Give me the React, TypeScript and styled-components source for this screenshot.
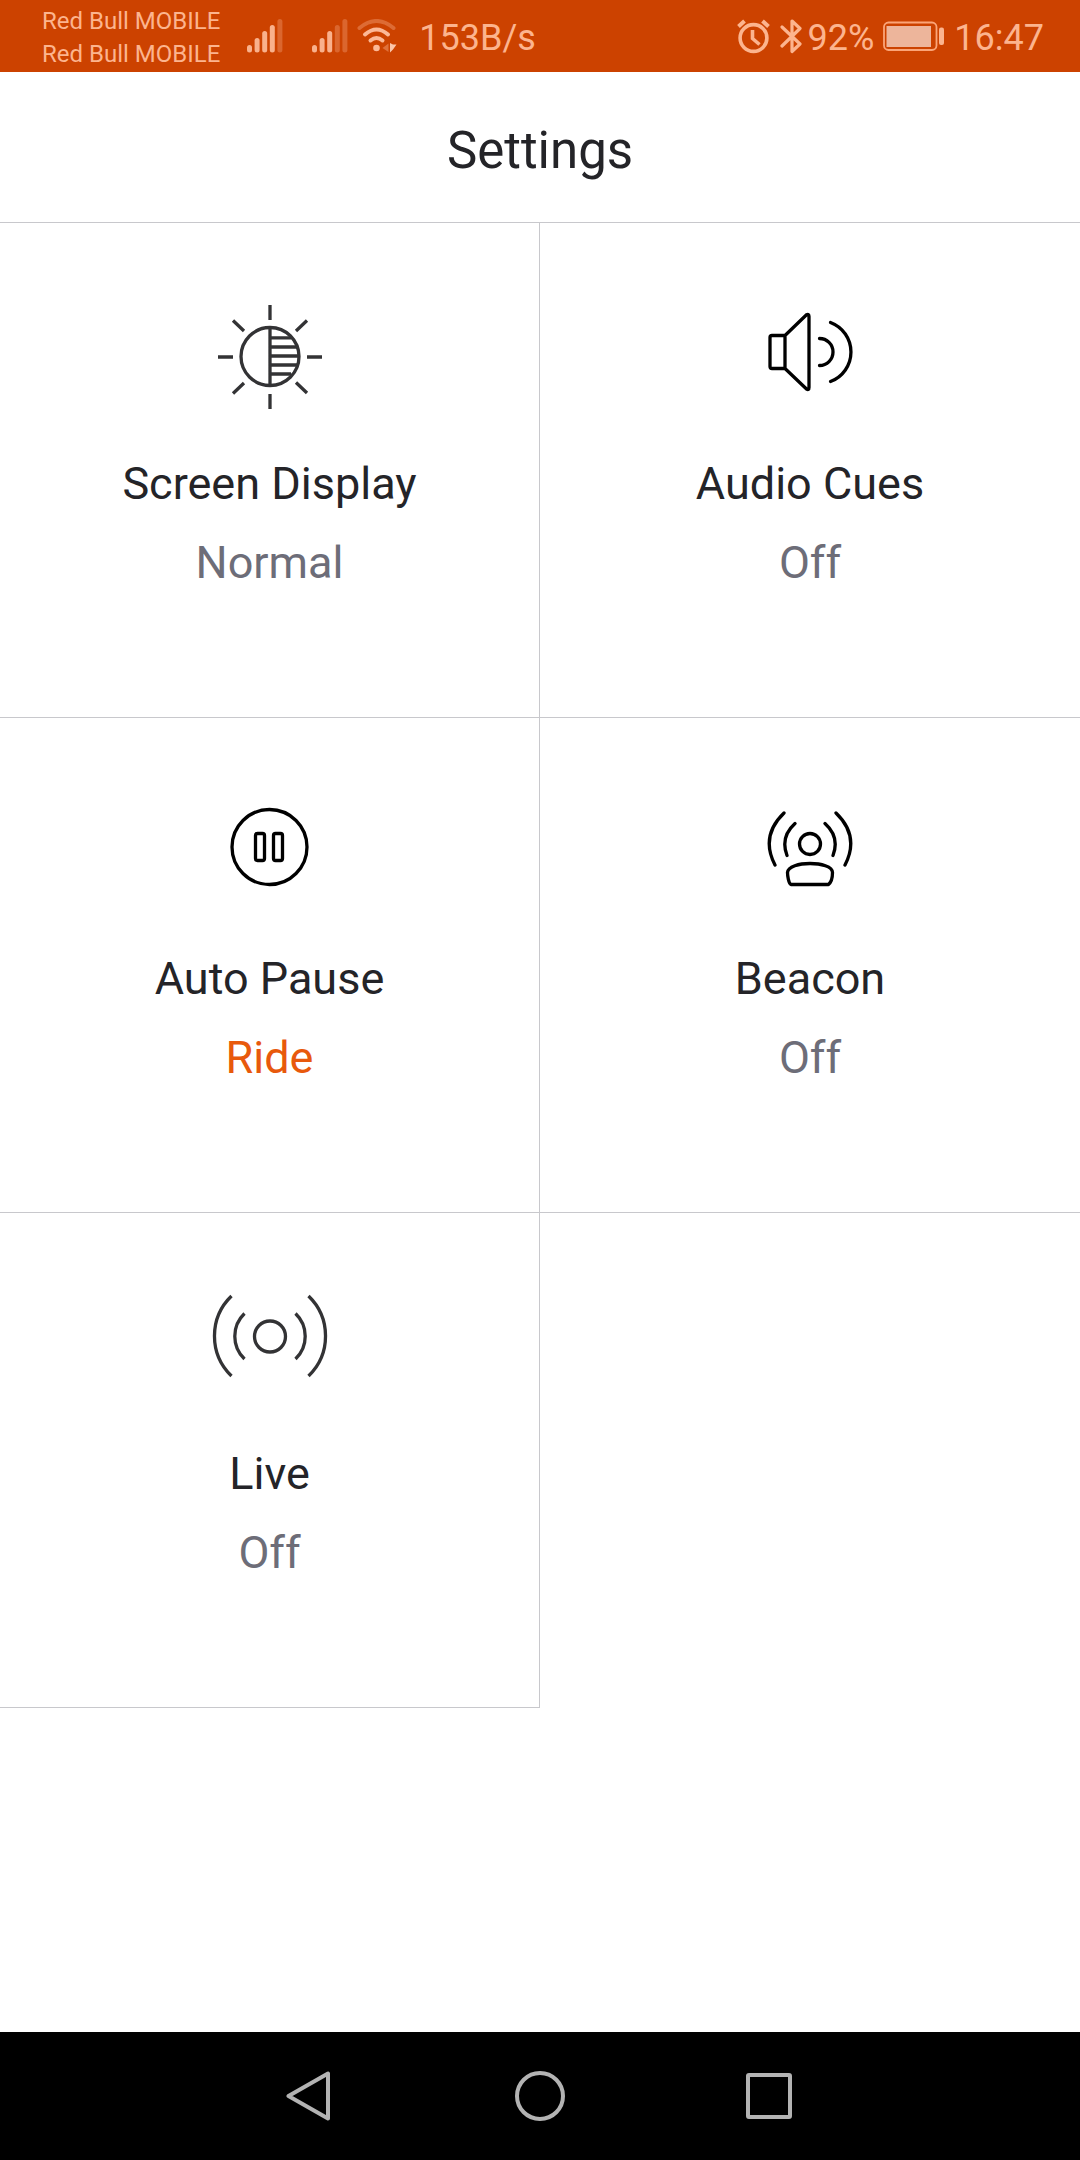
import React from 'react';
import styled, { createGlobalStyle } from 'styled-components';

const GlobalStyle = createGlobalStyle`
  *, *::before, *::after { box-sizing: border-box; }
  body { margin: 0; background: #fff; }
  button { margin: 0; padding: 0; border: 0; background: none; font: inherit; color: inherit; cursor: pointer; }
  svg { display: block; flex: none; }
`;

const Screen = styled.div`
  display: flex;
  flex-direction: column;
  min-height: 100vh;
  font-family: Roboto, 'Liberation Sans', sans-serif;
  color: #242428;
`;

const StatusBar = styled.div`
  display: flex;
  align-items: center;
  justify-content: space-between;
  height: 72px;
  padding: 0 36px 0 42px;
  background: #cc4200;
  color: #fcb48e;
`;

const StatusGroup = styled.div<{ $gap: number }>`
  display: flex;
  align-items: center;
  gap: ${({ $gap }) => $gap}px;
`;

const Carriers = styled.div`
  margin-right: 5px;
  padding-top: 4px;
  font-size: 24px;
  line-height: 33px;
  white-space: nowrap;
`;

const StatusText = styled.span`
  padding-top: 4px;
  font-size: 36px;
  line-height: 68px;
  white-space: nowrap;
`;

const Header = styled.header`
  display: flex;
  align-items: center;
  justify-content: center;
  height: 151px;
  padding-top: 7px;
  border-bottom: 1px solid #c8c8cc;
`;

const Title = styled.h1`
  margin: 0;
  font-size: 51px;
  line-height: 60px;
  font-weight: 400;
`;

const Tiles = styled.main`
  display: grid;
  grid-template-columns: 1fr 1fr;
  flex: 1;
  align-content: start;
`;

const Tile = styled.button`
  display: flex;
  flex-direction: column;
  align-items: center;
  height: 495px;
  padding-top: 60px;
  border-bottom: 1px solid #c8c8cc;

  &:nth-child(odd) {
    border-right: 1px solid #c8c8cc;
  }
`;

const TileIcon = styled.svg.attrs({ viewBox: '0 0 144 144', strokeWidth: 3.3 })<{ $soft?: boolean }>`
  width: 144px;
  height: 144px;
  fill: none;
  stroke: ${({ $soft }) => ($soft ? '#333335' : '#000')};
  stroke-linecap: ${({ $soft }) => ($soft ? 'butt' : 'round')};
  stroke-linejoin: round;
`;

const TileName = styled.span`
  margin-top: 17px;
  font-size: 45px;
  line-height: 79px;
`;

const TileValue = styled.span<{ $active?: boolean }>`
  font-size: 45px;
  line-height: 79px;
  color: ${({ $active }) => ($active ? '#e8590c' : '#6d6d78')};
`;

const NavBar = styled.nav`
  display: flex;
  align-items: center;
  justify-content: center;
  gap: 163px;
  height: 128px;
  background: #000;
`;

const NavButton = styled.button`
  display: flex;
  width: 66px;
  height: 66px;
  align-items: center;
  justify-content: center;

  svg {
    fill: none;
    stroke: #b3b3b3;
    stroke-width: 4;
    stroke-linejoin: round;
  }
`;

const BAR_TOPS = [26, 19, 12, 6, 0];

const Signal = ({ level }: { level: number }) => (
  <svg width="36" height="34" viewBox="0 0 36 34" fill="#f9b18c" aria-label={`Signal ${level} of 5`}>
    {BAR_TOPS.map((top, i) => (
      <rect key={top} x={i * 7.6} y={top} width="5" height={33.5 - top} rx="2.5" opacity={i < level ? 1 : 0.33} />
    ))}
  </svg>
);

const Wifi = () => (
  <svg width="40" height="34" viewBox="0 0 40 34" fill="none" stroke="#fcb896" strokeWidth="4" strokeLinecap="round" aria-label="Wi-Fi">
    <path d="M2.500 9Q19.500-5 36.500 9" opacity="0.35" />
    <path d="M8 15.500Q19.500 5.500 31 15.500" />
    <path d="M13.500 21.500Q19.500 16.500 25.500 21.500" />
    <circle cx="19.500" cy="29" r="3.300" fill="#fcb896" stroke="none" />
    <path d="M25.500 29l6-4.500v8.500z" fill="#fcb896" stroke="none" opacity="0.4" />
    <path d="M33 24v9.500l3-3 3.500-5h-3.500z" fill="#fcc6aa" stroke="none" />
  </svg>
);

const Alarm = () => (
  <svg width="34" height="36" viewBox="0 0 34 36" fill="none" stroke="#fcb48e" strokeWidth="3.6" aria-label="Alarm set">
    <circle cx="16.500" cy="20" r="13.400" />
    <path d="M15.500 12v8.500l7 6" strokeWidth="3.6" />
    <path d="M1.500 8.500L7.500 3M25.500 3l6 5.500" strokeWidth="4" />
  </svg>
);

const Bluetooth = () => (
  <svg width="22" height="36" viewBox="0 0 22 36" fill="none" stroke="#fcb48e" strokeWidth="3.2" strokeLinecap="round" strokeLinejoin="round" aria-label="Bluetooth">
    <path d="M2 9l18 17-8 7.500V3L20 10.500 2 28" />
  </svg>
);

const Battery = () => (
  <svg width="62" height="30" viewBox="0 0 62 30" fill="none" aria-label="Battery">
    <rect x="1" y="1.500" width="52.500" height="27.500" rx="4.500" stroke="#fba578" strokeWidth="1.8" />
    <rect x="3.500" y="5" width="44.500" height="21" fill="#edb59b" />
    <rect x="56" y="6.500" width="5" height="17.500" rx="2" fill="#fcb48e" />
  </svg>
);

const ScreenDisplayIcon = () => (
  <TileIcon $soft>
    <circle cx="72" cy="73.500" r="29" />
    <path d="M72 44.500v58M72 54.800h21M72 64h27M72 73h29M72 82h27M72 91h21" />
    <path d="M72 22v15M72 111v15M20 74h15M109 74h15M35 37.500l11 10.500M109 37.500L98 48M35 110.500L46 100M109 110L98 99.500" />
  </TileIcon>
);

const AudioIcon = () => (
  <TileIcon>
    <path d="M47 52.500H34a2 2 0 0 0-2 2v29a2 2 0 0 0 2 2h13zM47 52.500L68.500 31.800Q71 30.500 71 33.500v71Q71 107.500 68.500 106L47 85.500" />
    <path d="M81.500 55.500a13.500 13.500 0 0 1 0 27M92.500 39.500a31.500 31.500 0 0 1 0 59" />
  </TileIcon>
);

const PauseIcon = () => (
  <TileIcon>
    <circle cx="71.500" cy="69" r="37.500" />
    <rect x="57.500" y="55.500" width="9" height="27" rx="2" />
    <rect x="75.500" y="55.500" width="9" height="27" rx="2" />
  </TileIcon>
);

const BeaconIcon = () => (
  <TileIcon>
    <circle cx="72" cy="66" r="10.500" />
    <path d="M53 106.500C50.500 105.500 49.500 97 49.500 94.500C50 88.500 61 85.500 72 85.500S94.500 88.500 94.500 94.500C94.500 99 93.500 104 90.500 106.500z" />
    <path d="M57 45.500Q42 59 49 77.500M87 45.500Q102 59 95 77.500M46 35Q22 58 37 87M98 35Q122 58 107 87" />
  </TileIcon>
);

const LiveIcon = () => (
  <TileIcon $soft>
    <circle cx="72" cy="63.500" r="15.500" />
    <path d="M46.500 40.500a31.500 31.500 0 0 0 0 45.500M97.500 40.500a31.500 31.500 0 0 1 0 45.500M33.500 23a55.500 55.500 0 0 0 0 80M110.500 23a55.500 55.500 0 0 1 0 80" />
  </TileIcon>
);

const SETTINGS = [
  { name: 'Screen Display', value: 'Normal', Icon: ScreenDisplayIcon },
  { name: 'Audio Cues', value: 'Off', Icon: AudioIcon },
  { name: 'Auto Pause', value: 'Ride', active: true, Icon: PauseIcon },
  { name: 'Beacon', value: 'Off', Icon: BeaconIcon },
  { name: 'Live', value: 'Off', Icon: LiveIcon },
];

export default function App() {
  return (
    <Screen>
      <GlobalStyle />
      <StatusBar>
        <StatusGroup $gap={22}>
          <Carriers>
            <div>Red Bull MOBILE</div>
            <div>Red Bull MOBILE</div>
          </Carriers>
          <StatusGroup $gap={29}>
            <Signal level={4} />
            <StatusGroup $gap={9}>
              <Signal level={3} />
              <Wifi />
            </StatusGroup>
          </StatusGroup>
          <StatusText>153B/s</StatusText>
        </StatusGroup>
        <StatusGroup $gap={9}>
          <Alarm />
          <StatusGroup $gap={6}>
            <Bluetooth />
            <StatusText>92%</StatusText>
          </StatusGroup>
          <Battery />
          <StatusText>16:47</StatusText>
        </StatusGroup>
      </StatusBar>
      <Header>
        <Title>Settings</Title>
      </Header>
      <Tiles>
        {SETTINGS.map(({ name, value, active, Icon }) => (
          <Tile key={name} type="button">
            <Icon />
            <TileName>{name}</TileName>
            <TileValue $active={active}>{value}</TileValue>
          </Tile>
        ))}
      </Tiles>
      <NavBar>
        <NavButton type="button" aria-label="Back">
          <svg width="50" height="50" viewBox="0 0 50 50"><path d="M42 2.500v45L2.500 25z" /></svg>
        </NavButton>
        <NavButton type="button" aria-label="Home">
          <svg width="50" height="50" viewBox="0 0 50 50"><circle cx="25" cy="25" r="23" /></svg>
        </NavButton>
        <NavButton type="button" aria-label="Recent apps">
          <svg width="50" height="50" viewBox="0 0 50 50"><rect x="4" y="4" width="42" height="42" rx="1" /></svg>
        </NavButton>
      </NavBar>
    </Screen>
  );
}
